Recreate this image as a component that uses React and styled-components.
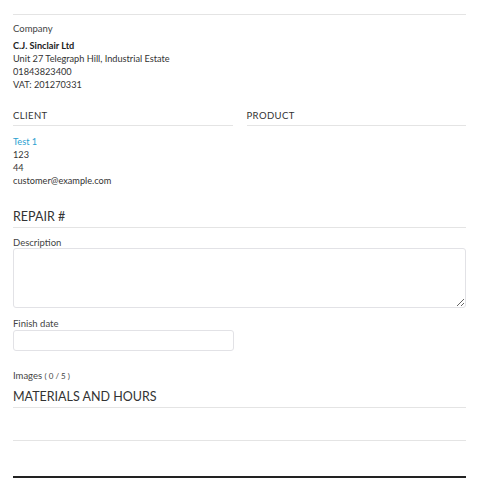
import React from "react";
import styled, { createGlobalStyle } from "styled-components";

const Global = createGlobalStyle`
  html, body { margin: 0; padding: 0; background: #fff; }
  body { font-family: Lato, "Noto Sans", sans-serif; color: #333; }
`;

const Page = styled.div`
  width: 480px;
  height: 480px;
  overflow: hidden;
  padding: 14px 14px 0 13px;
  box-sizing: border-box;
`;

const Rule = styled.hr`
  margin: 0;
  border: 0;
  border-top: ${(p) => p.$w || 1}px solid ${(p) => p.$color || "#e4e4e4"};
`;

const Label = styled.div`
  font-size: ${(p) => p.$size || 9.5}px;
  color: #444;
  line-height: ${(p) => p.$lh || 13}px;
  margin-top: ${(p) => p.$mt || 0}px;
`;

const Lines = styled.div`
  font-size: 9.2px;
  line-height: 13px;
  color: #333;
  margin-top: ${(p) => p.$mt || 0}px;
`;

const Bold = styled.div`
  font-weight: 700;
  color: #222;
`;

const Link = styled.div`
  color: #2a9fd0;
`;

const Columns = styled.div`
  display: grid;
  grid-template-columns: 1fr 1fr;
  column-gap: 14px;
  margin-top: 18px;
`;

const ColHead = styled.div`
  font-size: 9.5px;
  letter-spacing: 0.4px;
  color: #333;
  line-height: 13px;
  padding-bottom: 3px;
  border-bottom: 1px solid #e4e4e4;
`;

const Heading = styled.div`
  font-size: 12.5px;
  letter-spacing: 0;
  color: #333;
  line-height: 16px;
  padding-bottom: 2px;
  border-bottom: 1px solid #e4e4e4;
  margin-top: ${(p) => p.$mt || 0}px;
`;

const TextArea = styled.textarea`
  display: block;
  box-sizing: border-box;
  width: 100%;
  height: 60px;
  margin: 0;
  border: 1px solid #e2e2e6;
  border-radius: 3px;
  resize: vertical;
  font-family: inherit;
`;

const Input = styled.input`
  display: block;
  box-sizing: border-box;
  width: 221px;
  height: 21px;
  margin: 1px 0 0;
  border: 1px solid #e2e2e6;
  border-radius: 3px;
`;

const Small = styled.span`
  font-size: 8px;
`;

const Spacer = styled.div`
  height: ${(p) => p.$h}px;
`;

export default function App() {
  return (
    <>
      <Global />
      <Page>
        <Rule />
        <Label $mt={7}>Company</Label>
        <Lines $mt={4}>
          <Bold>C.J. Sinclair Ltd</Bold>
          <div>Unit 27 Telegraph Hill, Industrial Estate</div>
          <div>01843823400</div>
          <div>VAT: 201270331</div>
        </Lines>
        <Columns>
          <div>
            <ColHead>CLIENT</ColHead>
            <Lines $mt={9}>
              <Link>Test 1</Link>
              <div>123</div>
              <div>44</div>
              <div>customer@example.com</div>
            </Lines>
          </div>
          <div>
            <ColHead>PRODUCT</ColHead>
          </div>
        </Columns>
        <Heading $mt={22}>REPAIR #</Heading>
        <Label $mt={9} $lh={11}>Description</Label>
        <TextArea />
        <Label $mt={10} $lh={11}>Finish date</Label>
        <Input />
        <Label $mt={18}>
          Images <Small>( 0 / 5 )</Small>
        </Label>
        <Heading $mt={6}>MATERIALS AND HOURS</Heading>
        <Spacer $h={32} />
        <Rule />
        <Spacer $h={35} />
        <Rule $color="#222" $w={2} />
      </Page>
    </>
  );
}
